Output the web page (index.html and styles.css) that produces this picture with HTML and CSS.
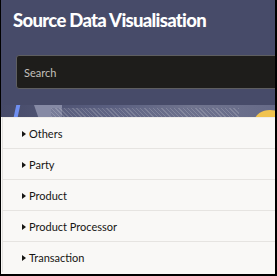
FILE: index.html
```html
<html>
  <head>
    <title>Source Data Visualisation</title>
    <meta name="viewport" content="width=device-width, initial-scale=1">
    <link rel="stylesheet" href="styles.css">
  </head>
  <body>
    <div class="frame">
      <div class="header">
        <h1>Source Data Visualisation</h1>
        <div class="search">
          <span>Search</span>
        </div>
        <!-- decorative banner strip -->
        <div class="banner">
          <div class="stroke"></div>
          <div class="wedge"></div>
          <div class="speckle"></div>
          <div class="sun"></div>
        </div>
      </div>
      <ul class="tree">
        <li><span class="caret"></span>Others</li>
        <li><span class="caret"></span>Party</li>
        <li><span class="caret"></span>Product</li>
        <li><span class="caret"></span>Product Processor</li>
        <li><span class="caret"></span>Transaction</li>
      </ul>
    </div>
  </body>
</html>
```

FILE: styles.css
```css
body {
  margin: 0;
  font-family: Lato, "Open Sans", "Liberation Sans", sans-serif;
}
.frame {
  box-sizing: border-box;
  width: 277px;
  height: 276px;
  border-left: 1px solid #000;
  border-right: 2px solid #000;
  border-bottom: 2px solid #000;
  overflow: hidden;
  background: #f9f8f6;
}
.header {
  background-color: #474b69;
  padding-top: 6px;
}
.header h1 {
  margin: 0 0 0 12px;
  color: #fff;
  font-size: 18.5px;
  font-weight: 900;
  line-height: 28px;
  letter-spacing: -0.7px;
}
.search {
  margin: 21px -10px 0 15px;
  height: 32px;
  background: #1e1d1b;
  border: 1px solid #5e5e60;
  border-radius: 3px;
  display: flex;
  align-items: center;
  padding-left: 7px;
}
.search span {
  color: #c4c0bb;
  font-size: 11px;
}
.banner {
  position: relative;
  margin-top: 16px;
  height: 12px;
  background: linear-gradient(90deg, #474b69 0%, #5a5f80 40%, #71758f 70%, #666a88 100%);
  overflow: hidden;
}
.stroke {
  position: absolute;
  left: 14px;
  top: 0;
  width: 4px;
  height: 12px;
  background: #6f8ff0;
  transform: skewX(-12deg);
}
.wedge {
  position: absolute;
  left: 33px;
  top: 0;
  width: 28px;
  height: 12px;
  background: #868aa5;
  clip-path: polygon(0 0, 100% 0, 100% 100%, 15% 100%);
}
.speckle {
  position: absolute;
  left: 50px;
  top: 3px;
  width: 188px;
  height: 9px;
  background: repeating-linear-gradient(45deg, #9ea1b2 0 1px, #686c8a 1px 3px);
  opacity: 0.45;
}
.sun {
  position: absolute;
  left: 254px;
  top: 5px;
  width: 30px;
  height: 20px;
  border-radius: 50%;
  background: #f1c34f;
}
.tree {
  margin: 0;
  padding: 0;
  list-style: none;
  border-left: 1px solid #e4e2df;
  margin-left: 1px;
}
.tree li {
  display: flex;
  align-items: center;
  height: 30px;
  border-top: 1px solid #e6e4e1;
  padding-left: 19px;
  color: #161513;
  font-size: 11px;
}
.tree li:first-child {
  border-top-color: #efedeb;
}
.caret {
  width: 0;
  height: 0;
  border-top: 3.5px solid transparent;
  border-bottom: 3.5px solid transparent;
  border-left: 4px solid #161513;
  margin-right: 3px;
  margin-top: 1px;
}
```
